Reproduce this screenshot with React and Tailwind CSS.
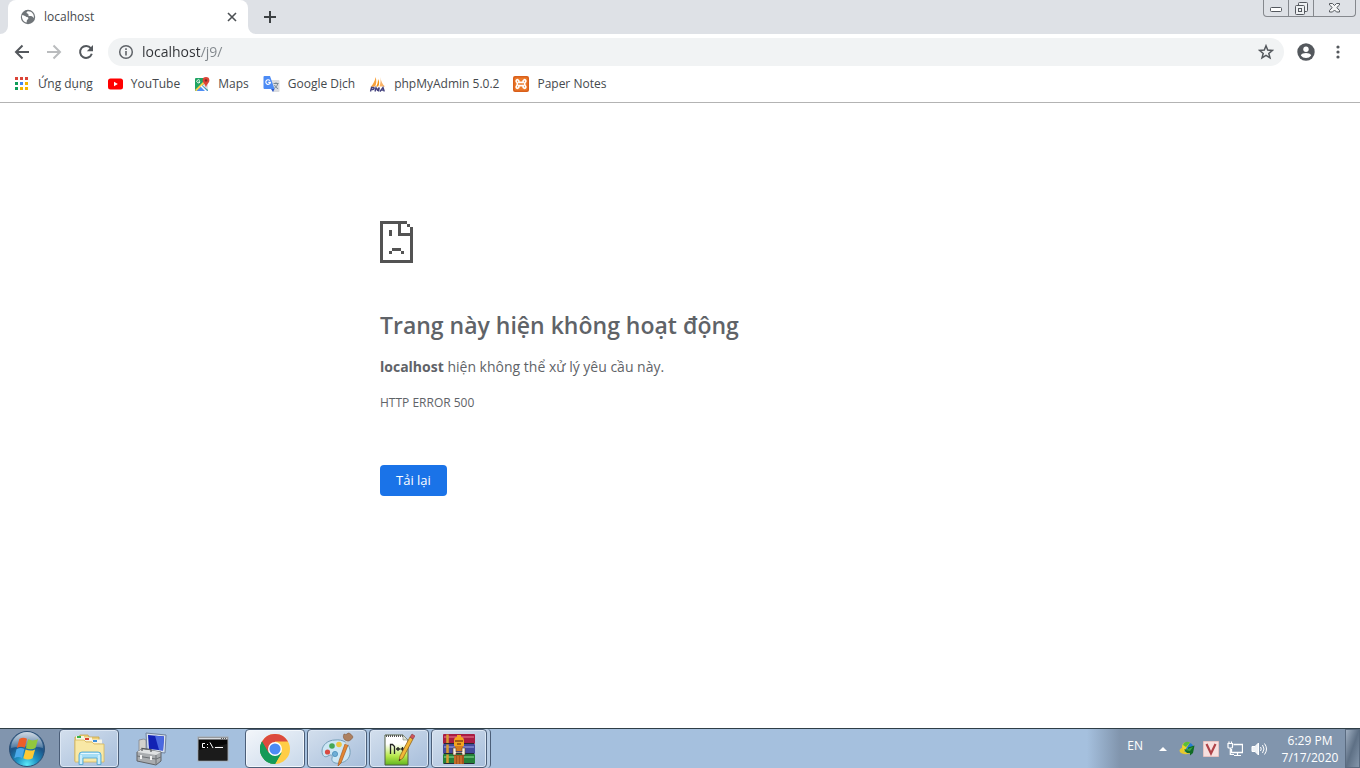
import { useState } from 'react'

/* ---------- Bookmark icons ---------- */

function AppsIcon() {
  const colors = ['#db4437', '#db4437', '#db4437', '#0f9d58', '#4285f4', '#f4b400', '#0f9d58', '#f4b400', '#f4b400']
  return (
    <svg viewBox="0 0 16 16" className="size-4" aria-hidden="true">
      {colors.map((c, i) => (
        <rect key={i} x={1 + (i % 3) * 5} y={1 + Math.floor(i / 3) * 5} width="3" height="3" fill={c} />
      ))}
    </svg>
  )
}

function YouTubeIcon() {
  return (
    <svg viewBox="0 0 16 16" className="size-4" aria-hidden="true">
      <rect x="1" y="2.5" width="15" height="11" rx="2.5" fill="#f00" />
      <path d="M7 5.8v4.4L10.8 8z" fill="#fff" />
    </svg>
  )
}

function MapsIcon() {
  return (
    <svg viewBox="0 0 16 16" className="size-4" aria-hidden="true">
      <rect x="1" y="2" width="13" height="13" rx="1" fill="#1fa463" />
      <path d="M7.5 8.5 14 15H2z" fill="#4f8ef5" />
      <path d="M1 14 13 2h1v2L2.5 15H2z" fill="#ffd04b" />
      <path d="M8.5 9.5 14 4v10z" fill="#e1e4e8" />
      <path d="m6.5 10.5 1-1L13 15h-2z" fill="#fff" />
      <path d="M5.9 4.6a1.6 1.6 0 1 0 .1 1.2H4.6" fill="none" stroke="#fff" strokeWidth=".9" />
      <path d="M12 1a3.4 3.4 0 0 0-3.4 3.4c0 2.3 2.6 3.4 3.4 7 .8-3.6 3.4-4.7 3.4-7A3.4 3.4 0 0 0 12 1z" fill="#dc4437" />
      <circle cx="12" cy="4.4" r="1.2" fill="#7e2a22" />
    </svg>
  )
}

function TranslateIcon() {
  return (
    <svg viewBox="0 0 17 16" className="h-4 w-[17px]" aria-hidden="true">
      <path d="M6 4h9.5a1 1 0 0 1 1 1v10a1 1 0 0 1-1 1H10z" fill="#dadce0" />
      <path d="M10.5 7.5h5M13 6.3v1.2M14.8 7.5c-.5 2.3-2 4-3.8 5M11.5 9c.8 1.8 2 3 3.6 3.7" fill="none" stroke="#6b7f8d" strokeWidth=".9" />
      <path d="M1.5 0H7l4.5 13h-10a1 1 0 0 1-1-1V1a1 1 0 0 1 1-1z" fill="#4c8bf5" />
      <path d="M8 13h3.5L10 16z" fill="#2a56c6" />
      <path d="M6.9 4.6a2.3 2.3 0 1 0 .5 1.8H5.3" fill="none" stroke="#fff" strokeWidth="1.1" />
    </svg>
  )
}

function PhpMyAdminIcon() {
  return (
    <svg viewBox="0 0 17 16" className="h-4 w-[17px]" aria-hidden="true">
      <path d="M6.5 1c1.3 3.5 1 7-.5 9.5L1.5 11C4 8.5 6 5 6.5 1z" fill="#f8a13c" />
      <path d="M9 3c1.5 2.5 1.5 5 .2 7.5H7C8.5 8.5 9 6 9 3z" fill="#f29111" />
      <path d="M11.5 1c.3 4 2 7.5 4.5 9.5h-5.5c1-3 1.3-6 1-9.5z" fill="#f9b266" />
      <g fill="none" stroke="#43417e" strokeWidth="1.3">
        <path d="m1.5 15.5 1-4h2c1.2 0 .8 2-.6 2H2" />
        <path d="m6 15.5 1-4 1.3 2.5 2-2.5-.8 4" />
        <path d="m11 15.5 3-4 1.3 4M12.3 14.2h2.5" />
      </g>
    </svg>
  )
}

function XamppIcon() {
  return (
    <svg viewBox="0 0 16 16" className="size-4" aria-hidden="true">
      <rect width="16" height="16" rx="2" fill="#d95f1a" />
      <rect x="1.5" y="1.5" width="13" height="13" rx="1" fill="#ec7a2b" />
      <g fill="none" stroke="#fff" strokeWidth="1.7" strokeLinecap="round" strokeLinejoin="round">
        <path d="M6 6.3C6.3 3.3 3.3 3 3.2 5c0 1.3 1.2 1.3 1.2 3s-1.2 1.7-1.2 3c.1 2 3.1 1.7 2.8-1.3" />
        <path d="M10 6.3C9.7 3.3 12.7 3 12.8 5c0 1.3-1.2 1.3-1.2 3s1.2 1.7 1.2 3c-.1 2-3.1 1.7-2.8-1.3" />
        <path d="M6 6.3h4M6 9.7h4" />
      </g>
    </svg>
  )
}

const BOOKMARKS = [
  { label: 'Ứng dụng', Icon: AppsIcon },
  { label: 'YouTube', Icon: YouTubeIcon },
  { label: 'Maps', Icon: MapsIcon },
  { label: 'Google Dịch', Icon: TranslateIcon },
  { label: 'phpMyAdmin 5.0.2', Icon: PhpMyAdminIcon },
  { label: 'Paper Notes', Icon: XamppIcon },
]

/* ---------- Browser chrome ---------- */

function WindowControls() {
  return (
    <div className="mr-1 flex h-[17px] rounded-b border border-t-0 border-[#85888d]">
      <button aria-label="Minimize" className="flex w-[25px] items-center justify-center border-r border-[#85888d]">
        <svg viewBox="0 0 13 12" className="h-3 w-[13px]">
          <rect x=".5" y="5.5" width="11" height="4" rx="1" fill="#fff" stroke="#54585e" />
        </svg>
      </button>
      <button aria-label="Restore" className="flex w-[25px] items-center justify-center border-r border-[#85888d]">
        <svg viewBox="0 0 13 13" className="size-[13px]" fill="#eef0f2" stroke="#54585e">
          <rect x="3.5" y=".5" width="9" height="9" rx="1" />
          <rect x=".5" y="3.5" width="9" height="9" rx="1" />
          <rect x="3.5" y="6.5" width="3" height="3" />
        </svg>
      </button>
      <button aria-label="Close" className="flex w-[41px] items-center justify-center">
        <svg viewBox="0 0 13 12" className="h-3 w-[13px]">
          <path
            d="M1.500 1.500h3l2 2 2-2h3v1.500L8.800 5.500 11.500 8.500V10h-3l-2-2-2 2h-3V8.500l2.700-3L1.500 3z"
            fill="#f4f5f6"
            stroke="#54585e"
          />
        </svg>
      </button>
    </div>
  )
}

function TabStrip() {
  return (
    <div className="flex h-[34px] items-start bg-[#dee1e6]">
      <svg viewBox="0 0 8 8" className="size-2 self-end" aria-hidden="true">
        <path d="M8 0v8H0a8 8 0 0 0 8-8z" fill="#fff" />
      </svg>
      <div className="flex h-full w-60 items-center rounded-t-lg bg-white pl-3 pr-2.5">
        <svg viewBox="0 0 16 16" className="size-4" aria-hidden="true">
          <circle cx="8" cy="8" r="7.2" fill="#707579" />
          <path d="M1.900 6.200c1.800-.1 3 .5 3.900 1.300.8.800 2.100.4 2.500 1.300.4 1-.6 1.500-1.200 2.100-.5.500-.2 1.500-.5 2.600C3.600 13 1.700 10 1.900 6.200z" fill="#fff" />
          <path d="M8 2.200c-1 .2-1.700 1.100-1.400 1.900.3.700 1.300.4 1.700 1 .4.700-.3 1.400.6 1.900 1.100.5 2.600-.2 4 .9.600.5.700 1 .9 1.300C14.500 5.600 12 2.100 8 2.200z" fill="#fff" />
        </svg>
        <span className="ml-2 flex-1 text-xs text-[#45494d]">localhost</span>
        <button aria-label="Close tab" className="flex size-3 items-center justify-center">
          <svg viewBox="0 0 10 10" className="size-2.5">
            <path d="m1 1 8 8M9 1 1 9" stroke="#4c5054" strokeWidth="1.6" />
          </svg>
        </button>
      </div>
      <svg viewBox="0 0 8 8" className="size-2 self-end" aria-hidden="true">
        <path d="M0 0v8h8a8 8 0 0 1-8-8z" fill="#fff" />
      </svg>
      <button aria-label="New tab" className="ml-2 flex h-full w-3 items-center justify-center">
        <svg viewBox="0 0 12 12" className="size-3">
          <path d="M6 0v12M0 6h12" stroke="#3c4043" strokeWidth="2" />
        </svg>
      </button>
      <div className="ml-auto">
        <WindowControls />
      </div>
    </div>
  )
}

function Toolbar() {
  const [url, setUrl] = useState('localhost/j9/')

  return (
    <div className="flex h-9 items-center px-3.5">
      <button aria-label="Back" className="size-4">
        <svg viewBox="0 0 16 16" className="size-4" fill="none" stroke="#54585d" strokeWidth="2">
          <path d="M15 8H2.500M8.500 1.500 2 8l6.500 6.500" />
        </svg>
      </button>
      <button aria-label="Forward" className="ml-4 size-4" disabled>
        <svg viewBox="0 0 16 16" className="size-4" fill="none" stroke="#babcbe" strokeWidth="2">
          <path d="M1 8h12.500M7.500 1.500 14 8l-6.500 6.500" />
        </svg>
      </button>
      <button aria-label="Reload" className="ml-4 size-4">
        <svg viewBox="0 0 16 16" className="size-4">
          <path d="M12.900 4.300A6 6 0 1 0 13.800 9.800" fill="none" stroke="#54585d" strokeWidth="2" />
          <path d="M15 1v6.200H8.800z" fill="#54585d" />
        </svg>
      </button>
      <div className="ml-3.5 flex h-7 flex-1 items-center rounded-full bg-[#f1f3f4] px-2.5">
        <svg viewBox="0 0 16 16" className="size-4" aria-hidden="true">
          <circle cx="8" cy="8" r="6.300" fill="none" stroke="#5f6368" strokeWidth="1.500" />
          <path d="M8 7v4.500M8 4.300v1.700" stroke="#5f6368" strokeWidth="1.600" />
        </svg>
        <input
          type="text"
          aria-label="Address"
          value={url}
          onChange={(e) => setUrl(e.target.value)}
          className="ml-2 min-w-0 flex-1 bg-[linear-gradient(90deg,#303236_58px,#80868b_58px)] bg-clip-text text-sm text-transparent outline-none"
        />
        <button aria-label="Bookmark this page" className="size-4">
          <svg viewBox="0 0 16 16" className="size-4">
            <path
              d="m8 1.800 1.700 4.300 4.700.3-3.600 3 1.200 4.500L8 11.400l-4 2.500 1.200-4.500-3.600-3 4.700-.3z"
              fill="none"
              stroke="#54585d"
              strokeWidth="1.500"
            />
          </svg>
        </button>
      </div>
      <button aria-label="Profile" className="ml-3 size-5">
        <svg viewBox="0 0 20 20" className="size-5">
          <circle cx="10" cy="10" r="8.700" fill="#54585d" />
          <circle cx="10" cy="7.300" r="2.700" fill="#fff" />
          <path d="M4.800 13.400c.5-1.700 3.200-2.400 5.200-2.400s4.700.7 5.200 2.400A6.400 6.400 0 0 1 10 16a6.400 6.400 0 0 1-5.200-2.600z" fill="#fff" />
        </svg>
      </button>
      <button aria-label="Menu" className="ml-3.5 size-4">
        <svg viewBox="0 0 16 16" className="size-4" fill="#54585d">
          <circle cx="8" cy="3" r="1.600" />
          <circle cx="8" cy="8" r="1.600" />
          <circle cx="8" cy="13" r="1.600" />
        </svg>
      </button>
    </div>
  )
}

function BookmarksBar() {
  return (
    <nav className="flex h-[33px] items-center gap-3.5 border-b border-[#b3b3b3] pb-1 pl-3.5">
      {BOOKMARKS.map(({ label, Icon }) => (
        <a key={label} href="#" className="flex items-center gap-2 text-xs text-[#45494d]">
          <Icon />
          {label}
        </a>
      ))}
    </nav>
  )
}

/* ---------- Error page ---------- */

function SadPage() {
  return (
    <svg viewBox="0 0 11 14" className="h-[42px] w-[33px]" shapeRendering="crispEdges" aria-hidden="true">
      <path
        d="M0 0h9v1H0zM0 1h1v12H0zM0 13h11v1H0zM10 2h1v11h-1zM9 1h1v1H9zM6 1h1v3H6zM6 4h4v1H6zM3 3h1v2H3zM4 9h3v1H4zM3 10h1v1H3zM7 10h1v1H7z"
        fill="#535353"
      />
    </svg>
  )
}

function ErrorPage() {
  return (
    <main className="flex-1 px-6 pt-[118px] text-[#5f6368]">
      <div className="mx-auto max-w-[600px]">
        <SadPage />
        <h1 className="mt-12 text-[23px] font-semibold leading-7">Trang này hiện không hoạt động</h1>
        <p className="mt-4 text-sm leading-6">
          <strong className="font-bold">localhost</strong> hiện không thể xử lý yêu cầu này.
        </p>
        <p className="mt-3 text-xs leading-6">HTTP ERROR 500</p>
        <button className="mt-[50px] h-[31px] rounded bg-[#1a73e8] px-4 text-[13px] font-medium text-white">Tải lại</button>
      </div>
    </main>
  )
}

/* ---------- Taskbar ---------- */

function StartOrb() {
  return (
    <svg viewBox="0 0 38 38" className="size-[38px]">
      <defs>
        <radialGradient id="orb" cx=".5" cy=".95" r=".85">
          <stop offset="0" stopColor="#5ceaf8" />
          <stop offset=".35" stopColor="#1f93c4" />
          <stop offset=".7" stopColor="#1d5588" />
          <stop offset="1" stopColor="#3a6590" />
        </radialGradient>
        <linearGradient id="orbShine" x1="0" y1="0" x2="0" y2="1">
          <stop offset="0" stopColor="#fff" stopOpacity=".75" />
          <stop offset="1" stopColor="#fff" stopOpacity=".2" />
        </linearGradient>
      </defs>
      <circle cx="19" cy="19" r="17.500" fill="url(#orb)" stroke="#2c5076" />
      <path d="M3 18a16 16 0 0 1 32 0c-9-2-22-2-32 0z" fill="url(#orbShine)" />
      <path d="M11.300 9c2.700-1.700 5-1.700 7.700-.3l-2.300 9c-2.600-1.400-5-1.400-7.900.4z" fill="#ec5f2a" />
      <path d="M20.200 9.300c2.800 1.500 6 1.700 9.800-.3l-2.500 9c-3 1.700-6.300 1.600-9.600.2z" fill="#92c83e" />
      <path d="M8.500 19.300c2.800-1.700 5.200-1.700 7.900-.3l-2.400 9c-2.700-1.500-5-1.500-7.700.3z" fill="#4ba9ea" />
      <path d="M17.600 19.500c3 1.400 6.300 1.500 9.500-.1l-2.500 8.800c-3 1.700-6.200 1.700-9.300.1z" fill="#fdc935" />
    </svg>
  )
}

function ExplorerIcon() {
  return (
    <svg viewBox="0 0 34 32" className="h-8 w-[34px]">
      <path d="M3 4h4l1-2h8l1 2h10v24H3z" fill="#edd078" stroke="#c9a548" strokeWidth=".8" />
      <path d="M4 3h8v4H4z" fill="#f8f5e6" />
      <path d="M5 3h4v2H5z" fill="#35b34a" />
      <path d="M12 4.500h8v4h-8z" fill="#f8f5e6" />
      <path d="M13 5h4v2h-4z" fill="#d8412f" />
      <path d="M20 6.500h10v4H20z" fill="#f8f5e6" />
      <path d="M21 7h4v2h-4z" fill="#3c8edb" />
      <path d="M3 7h9l2 2h6l2 2h10v18H3z" fill="#f8e8a6" stroke="#d5b65c" strokeWidth=".8" />
      <path d="M7 31.500V22q0-3 3-3h16q3 0 3 3v9.500h-4V25H11v6.500z" fill="#a5ddf5" stroke="#58a9d2" strokeWidth=".9" />
      <path d="M9 20.500h18M9 22v9M27 22v9" stroke="#e7f8ff" strokeWidth="1.200" />
    </svg>
  )
}

function ComputerIcon() {
  return (
    <svg viewBox="0 0 34 34" className="size-[34px]">
      <path d="m5 8 5-1 2 1v10l-6 1-1-1z" fill="#d2d2ce" stroke="#85868a" strokeWidth=".8" />
      <path d="m12 1 20 2-1 18-18-2z" fill="#d8e1ee" stroke="#70829b" />
      <path d="m14 3 16 1.500-1 14-14-1.500z" fill="#1222b4" />
      <path d="m21 3.700 9 .8-1 14-4-.5z" fill="#4968e0" />
      <path d="m3 20 5-3 19 3v9l-5 4-19-4z" fill="#a9acaf" stroke="#606367" />
      <path d="m3 20 5-3 19 3-5 3z" fill="#dfe1e2" />
      <path d="m3 24 19 3 5-2M22 23v9" fill="none" stroke="#6c7074" />
      <path d="M8 19v-2.500l9 1V20" fill="none" stroke="#55585c" strokeWidth="1.200" />
      <path d="M7 23v4M17 24v4" stroke="#f2f2f2" strokeWidth="2" />
    </svg>
  )
}

function ConsoleIcon() {
  return (
    <svg viewBox="0 0 32 26" className="h-[26px] w-8">
      <rect x="1" y="1" width="30" height="24" fill="#070707" stroke="#a7abb0" />
      <rect x="1.500" y="1.500" width="29" height="2" fill="#d8dce1" />
      <path d="M24 2.500h1M26 2.500h1M28 2.500h1" stroke="#555" />
      <path d="M1.500 14 30 8v16.500H1.500z" fill="#242424" opacity=".7" />
      <g fill="none" stroke="#fff">
        <path d="M8 7.500H5.500v4H8M10.500 8v1M10.500 11v1M13 6.500l3 5.500M18 11.500h8" />
      </g>
    </svg>
  )
}

function ChromeIcon() {
  return (
    <svg viewBox="0 0 30 30" className="size-[30px]">
      <circle cx="15" cy="15" r="15" fill="#ffcd46" />
      <path d="M15 15 2 7.500A15 15 0 0 0 15 30l6.500-11.250z" fill="#149a58" />
      <path d="M2 7.500A15 15 0 0 1 28 7.500H15v7.500l-6.500 3.750z" fill="#dc4a3e" />
      <path d="M2 7.500A15 15 0 0 0 15 30l6.500-11.250L15 22a7.500 7.500 0 0 1-6.500-3.250z" fill="#149a58" />
      <circle cx="15" cy="15" r="7" fill="#fff" />
      <circle cx="15" cy="15" r="5.600" fill="#4c8bf5" />
    </svg>
  )
}

function PaintIcon() {
  return (
    <svg viewBox="0 0 34 34" className="size-[34px]">
      <path
        d="M15 8C8 8 2 13 2 19c0 5 3 7 6 5s5-1 4 2c-1 4 3 6 8 5 7-1 11-6 10-13C29 11 23 7 15 8z"
        fill="#cde7f5"
        stroke="#769fb9"
      />
      <circle cx="7.500" cy="20" r="2.600" fill="#d94a42" />
      <circle cx="12" cy="14" r="2.800" fill="#45a756" />
      <circle cx="19" cy="12.500" r="2.800" fill="#efc641" />
      <circle cx="15" cy="22" r="2.600" fill="#6eaed6" stroke="#478db9" strokeWidth=".8" />
      <path d="m25 12 3 1-7 18-3 3 1-5z" fill="#e48732" stroke="#a85c24" strokeWidth=".7" />
      <path d="m25 12 1-4 3 1-1 4z" fill="#c9ced0" />
      <path d="M25 8c-2-2-2-4-1-6 2 1 3 0 4-1 2 0 4 2 5 4-1 2-3 4-5 4z" fill="#ad8060" stroke="#7d5940" strokeWidth=".6" />
    </svg>
  )
}

function NotepadIcon() {
  return (
    <svg viewBox="0 0 32 34" className="h-[34px] w-8">
      <defs>
        <linearGradient id="npp" x1="0" y1="0" x2="0" y2="1">
          <stop offset=".3" stopColor="#fff" />
          <stop offset=".7" stopColor="#b7e84a" />
          <stop offset="1" stopColor="#61b51f" />
        </linearGradient>
      </defs>
      <path d="M2 3h18l5 5v25H2z" fill="url(#npp)" stroke="#526044" />
      <path d="M3 4h17" stroke="#555" strokeWidth="2" strokeDasharray="1 1" />
      <path d="M20 3v5h5z" fill="#dde2d6" stroke="#808778" strokeWidth=".6" />
      <path d="M7.500 22V12.500h2l2 2V22M13 17h4M15 15v4M17.500 17h4M19.500 15v4" fill="none" stroke="#242424" strokeWidth="1.300" />
      <path d="m27 5 3 2-10 19-4 3 1-5z" fill="#f2b737" stroke="#91651f" strokeWidth=".8" />
      <path d="m27 5 2-3 3 2-2 3z" fill="#d1535a" stroke="#873c43" strokeWidth=".6" />
      <path d="m16 29 .5-2 1.300.8z" fill="#222" />
    </svg>
  )
}

function WinRarIcon() {
  return (
    <svg viewBox="0 0 34 32" className="h-8 w-[34px]">
      <rect x="1" y="1" width="32" height="10" rx="1" fill="#a91d42" />
      <rect x="1" y="11" width="32" height="10" rx="1" fill="#454a9c" />
      <rect x="1" y="21" width="32" height="10" rx="1" fill="#25803a" />
      <path d="M2 4h30" stroke="#d95c79" strokeWidth="1.500" />
      <path d="M2 14h30" stroke="#858bd1" strokeWidth="1.500" />
      <path d="M2 24h30" stroke="#6bc479" strokeWidth="1.500" />
      <path d="M5.500 1.500v9M5.500 11.500v9M5.500 21.500v9" stroke="#d99c31" strokeWidth="2.500" />
      <path d="M2 10.500h30M2 20.500h30M2 30.500h30" stroke="#262a35" />
      <rect x="12" y="22" width="10" height="9" fill="#a6521d" />
      <path d="M13 23v8M16 23v8M19 23v8" stroke="#df8335" />
      <path d="M12 13V8q0-4 3-4V2h4v2q3 0 3 4v5z" fill="#f3a51f" />
      <path d="M13 8h8M15 11h4" stroke="#8c4715" strokeWidth="1.500" />
      <rect x="13" y="13" width="8" height="5" fill="#d57c20" />
      <path d="M11 15h3v4h6v-4h3v7h-3v-2h-6v2h-3z" fill="#f7efdd" stroke="#634526" strokeWidth=".6" />
    </svg>
  )
}

const TASKS = [
  { name: 'Windows Explorer', Icon: ExplorerIcon, open: true },
  { name: 'Computer Management', Icon: ComputerIcon, open: false },
  { name: 'Command Prompt', Icon: ConsoleIcon, open: false },
  { name: 'Google Chrome', Icon: ChromeIcon, open: true, active: true },
  { name: 'Paint', Icon: PaintIcon, open: true },
  { name: 'Notepad++', Icon: NotepadIcon, open: true },
  { name: 'WinRAR', Icon: WinRarIcon, open: true, stacked: true },
]

function TaskButton({ name, Icon, open, active, stacked }) {
  let frame = 'border-transparent'
  if (open) frame = 'border-[#4b5e78] bg-linear-to-br from-[#d3dfed] to-[#a7bedb] shadow-[inset_0_0_0_1px_#dce7f4]'
  if (active) frame = 'border-[#4b5e78] bg-linear-to-br from-[#f3f6fa] to-[#c8d8ea] shadow-[inset_0_0_0_1px_#f2f7fc]'

  const button = (
    <button
      aria-label={name}
      className={`flex h-full items-center justify-center rounded-sm border ${stacked ? 'w-14' : 'w-[60px]'} ${frame}`}
    >
      <Icon />
    </button>
  )
  if (!stacked) return button
  return (
    <div className="flex h-full rounded-sm border-r border-[#4b5e78] bg-[#b9cde4] pr-[3px]">
      {button}
    </div>
  )
}

function Tray() {
  return (
    <div className="ml-auto flex h-full items-center bg-linear-to-r from-transparent to-[#8195ad] to-[12%] pl-10 text-xs text-white">
      <span className="mb-1.5">EN</span>
      <button aria-label="Show hidden icons" className="ml-3 flex w-4 justify-center">
        <svg viewBox="0 0 8 4" className="h-1 w-2">
          <path d="M0 4h8L4 0z" fill="#fff" />
        </svg>
      </button>
      <svg viewBox="0 0 16 16" className="ml-2 size-4">
        <circle cx="9" cy="7" r="5.500" fill="#287ed0" />
        <path d="M3 6c0-4 4-6 8-4.500L8 6l-3 5C3.500 10 3 8 3 6z" fill="#ecd52b" />
        <path d="M4 4c1-3 4-4 7-2.500L7 6z" fill="#5abd3a" />
        <path d="M4 6.500C-1 8-.5 12 5 13c3 .5 5 0 7-1-5 0-9-2-8-5.500z" fill="#e5c92d" />
        <path d="M5 8.500h4v-2L15.500 4.500 14 12l-3 2.500V12H8z" fill="#116b24" />
        <path d="m6 9 8-3-3 4z" fill="#35a344" />
      </svg>
      <svg viewBox="0 0 16 16" className="ml-2 size-4">
        <rect width="16" height="16" fill="#f7e0df" stroke="#d5a7a7" />
        <path d="m3.500 3 4.500 9.500L12.500 3" fill="none" stroke="#b04349" strokeWidth="2.200" />
      </svg>
      <svg viewBox="0 0 16 16" className="ml-2 size-4" fill="none" stroke="#fff">
        <path d="M6.500 3.500h9v8h-11V8" strokeWidth="1.300" />
        <path d="M7 14.500h7M10.500 12v3M1 2.500h4.500V6q0 1-1 1H2Q1 7 1 6zM2 .5v2M4.500.5v2M3.300 7v6.500H7" strokeWidth="1.200" />
      </svg>
      <svg viewBox="0 0 16 16" className="ml-2 size-4" fill="none" stroke="#fff">
        <path d="M1 5.500h3L7.500 2v12L4 10.500H1z" fill="#eef1f5" />
        <path d="M9.500 6q1.500 2 0 4M11.500 4q3 4 0 8M13.500 2.500q4 5.500 0 11" />
      </svg>
      <time className="ml-2 w-[70px] text-center leading-[17px]" dateTime="2020-07-17T18:29">
        6:29 PM
        <br />
        7/17/2020
      </time>
      <button
        aria-label="Show desktop"
        className="h-full w-[15px] border border-[#5a6b80] bg-linear-to-br from-[#a1b0c2] via-[#5e7085] to-[#8496ab]"
      />
    </div>
  )
}

function Taskbar() {
  return (
    <footer className="flex h-10 items-center border-t border-[#2f3e46] bg-linear-to-r from-[#8195ae] from-[56px] to-[#a5c0de] to-[120px]">
      <button aria-label="Start" className="flex w-[59px] justify-start pl-2">
        <StartOrb />
      </button>
      <div className="flex h-full gap-0.5">
        {TASKS.map((task) => (
          <TaskButton key={task.name} {...task} />
        ))}
      </div>
      <Tray />
    </footer>
  )
}

function App() {
  return (
    <div className="flex min-h-screen flex-col bg-white font-['Open_Sans','Noto_Sans',sans-serif]">
      <header>
        <TabStrip />
        <Toolbar />
        <BookmarksBar />
      </header>
      <ErrorPage />
      <Taskbar />
    </div>
  )
}

export default App
